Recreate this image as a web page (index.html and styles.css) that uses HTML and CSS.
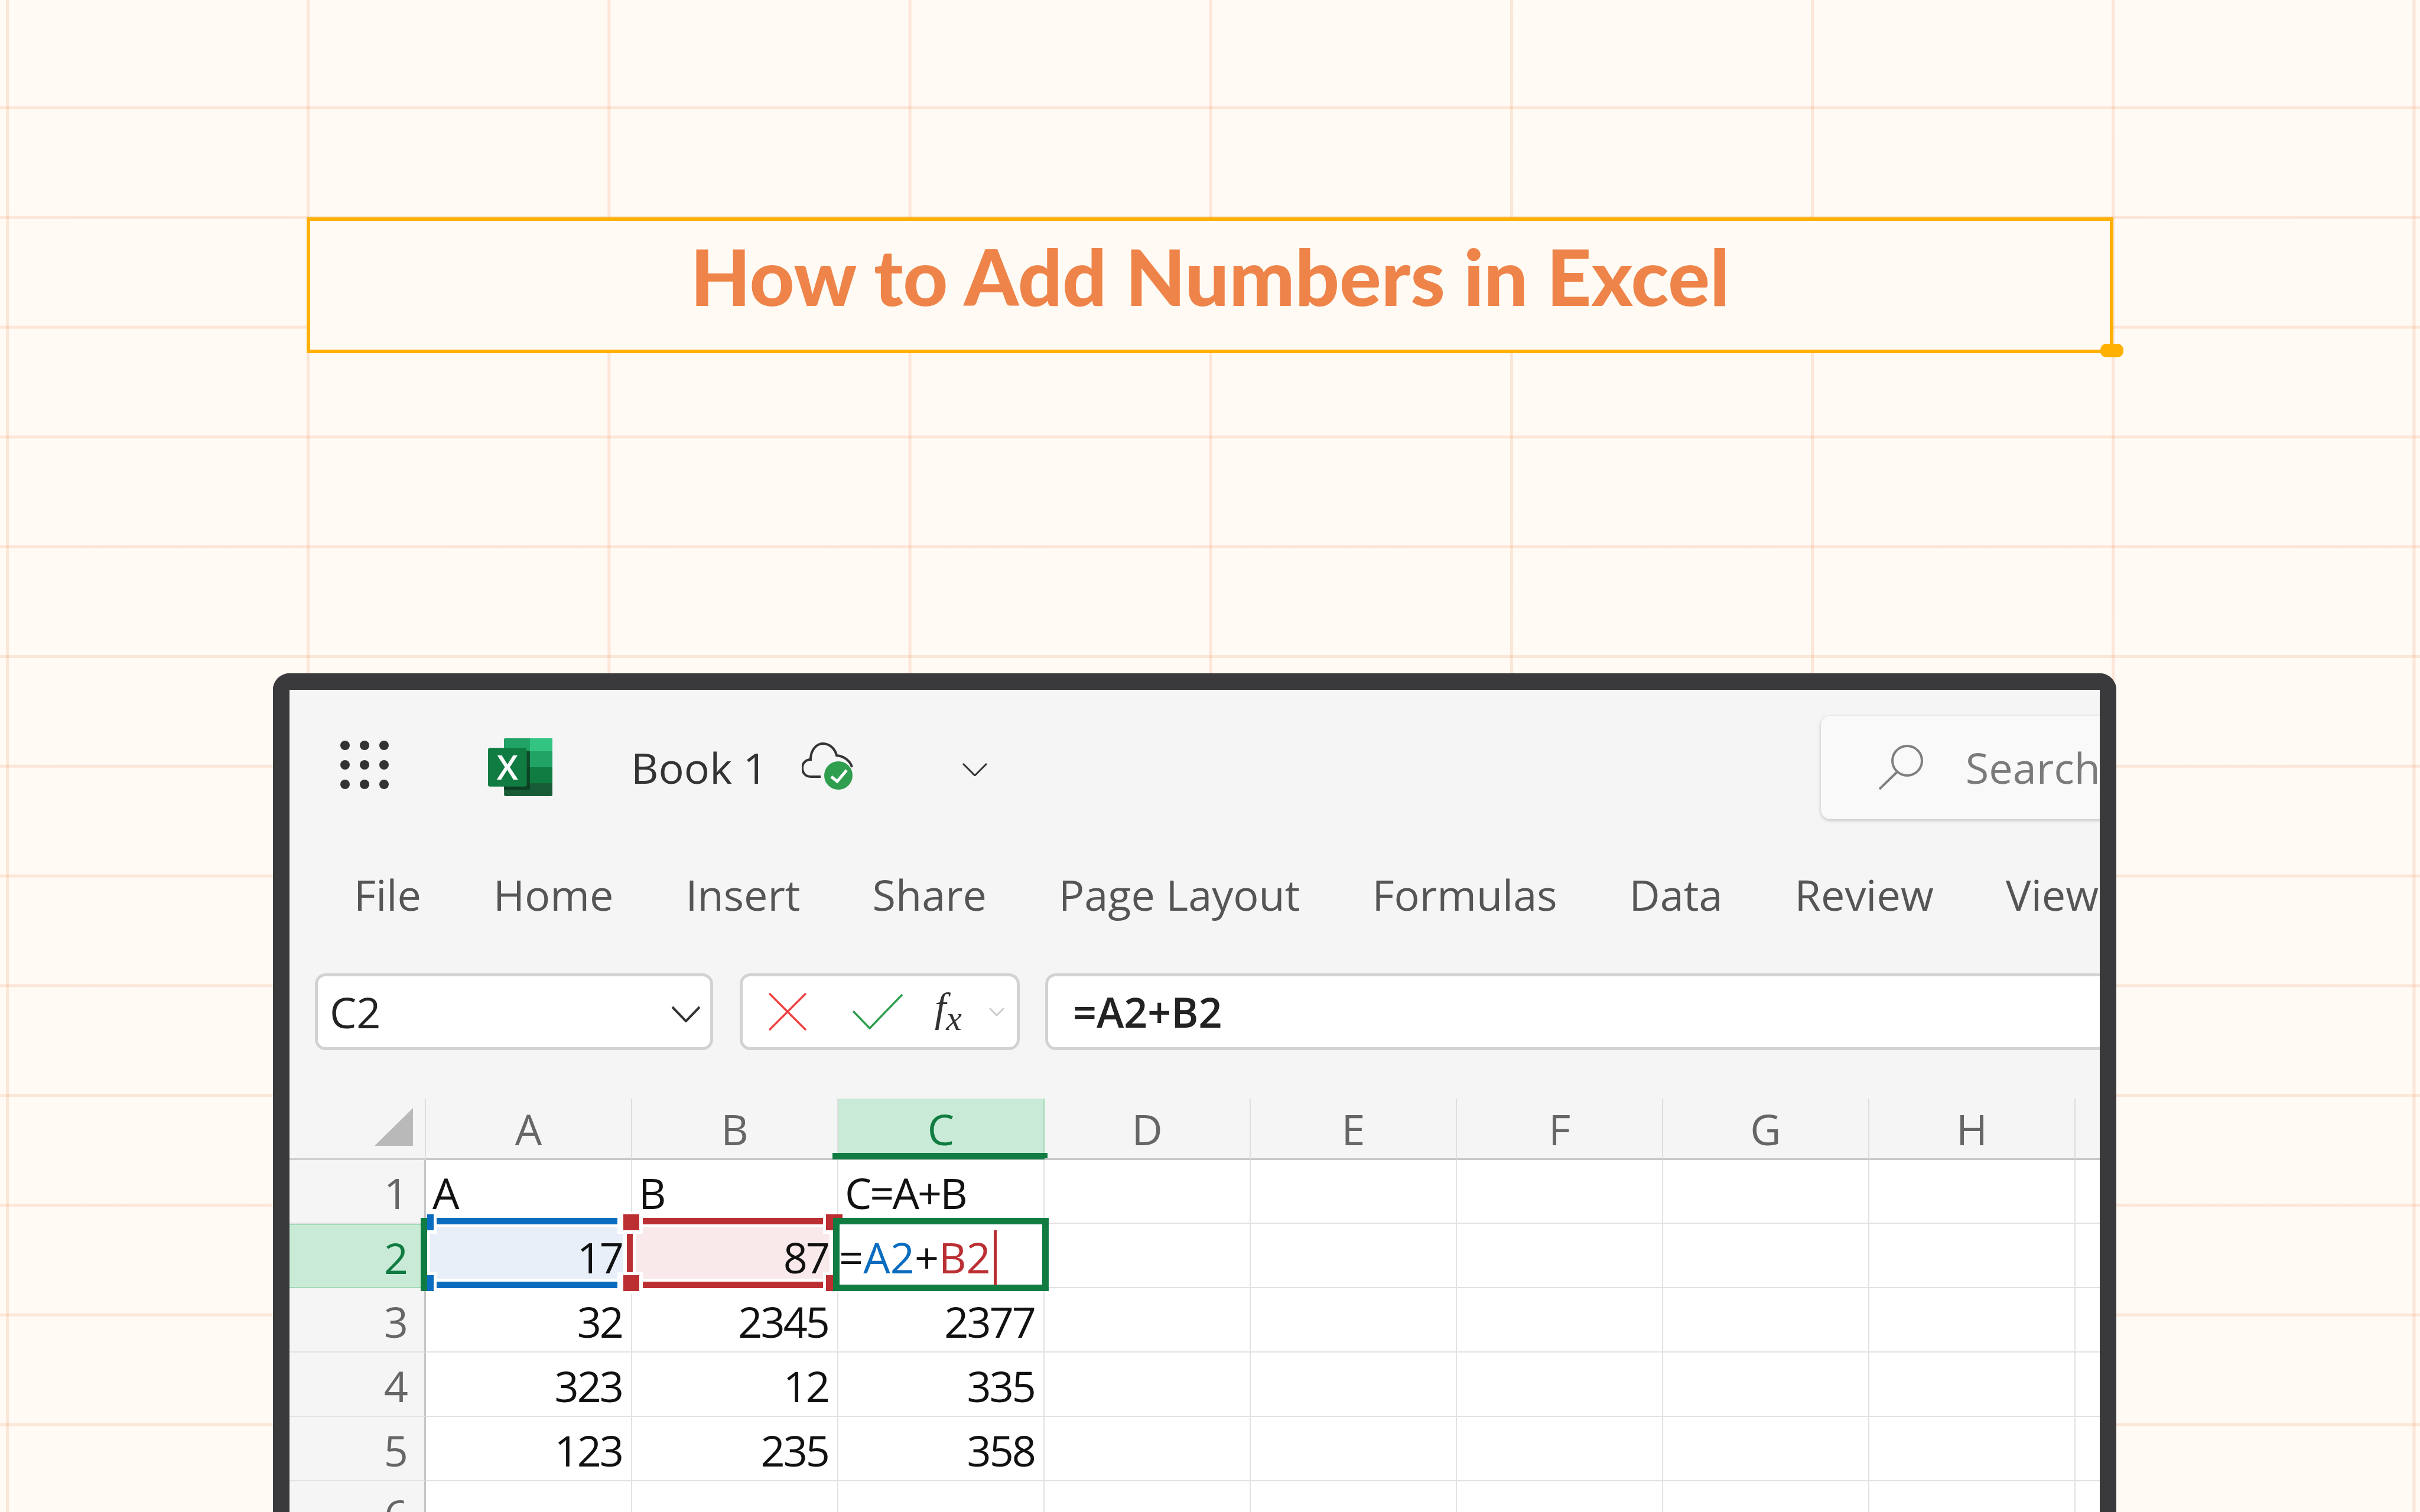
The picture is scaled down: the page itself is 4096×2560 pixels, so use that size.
FILE: index.html
```html
<!DOCTYPE html>
<html lang="en">
<head>
  <meta charset="UTF-8">
  <title>How to Add Numbers in Excel</title>
  <link rel="stylesheet" href="styles.css">
</head>
<body>

<!-- Title box -->
<div class="title-box">
  <h1>How to Add Numbers in Excel</h1>
  <span class="title-handle"></span>
</div>

<!-- Excel window -->
<div class="frame">

  <div class="topbar">
    <div class="waffle">
      <i></i><i></i><i></i>
      <i></i><i></i><i></i>
      <i></i><i></i><i></i>
    </div>
    <svg class="excel-logo" viewBox="159 126 409 368">
      <rect x="261" y="126" width="307" height="368" rx="10" fill="#185c37"/>
      <rect x="261" y="126" width="307" height="184" rx="10" fill="#21a366"/>
      <rect x="425" y="126" width="143" height="82" fill="#33c481"/>
      <rect x="261" y="310" width="307" height="102" fill="#107c41"/>
      <rect x="261" y="207" width="164" height="246" fill="#0c3a20" opacity="0.85"/>
      <rect x="159" y="187" width="246" height="246" rx="12" fill="#107c41"/>
      <text x="282" y="388" text-anchor="middle" class="excel-x">X</text>
    </svg>
    <span class="doc-name">Book 1</span>
    <svg class="cloud" viewBox="0 0 90 84">
      <path d="M32 58H15C6 58 1 51 1 43C1 35 7 29 15 29C15 14 24 2 36 2C48 2 57 12 59 22C70 23 82 30 85 42" fill="none" stroke="#333" stroke-width="4"/>
      <circle cx="62" cy="56" r="24" fill="#2f9e4f"/>
      <path d="M50 58L60 66L76 47" fill="none" stroke="#fff" stroke-width="5"/>
    </svg>
    <svg class="doc-chevron" viewBox="0 0 42 22">
      <path d="M1 1L21 21L41 1" fill="none" stroke="#333" stroke-width="3"/>
    </svg>
    <div class="search">
      <svg class="search-icon" viewBox="0 0 76 76">
        <circle cx="48" cy="27" r="25" fill="none" stroke="#7f7f7f" stroke-width="4"/>
        <path d="M31 46L1 75" fill="none" stroke="#7f7f7f" stroke-width="4"/>
      </svg>
      <span>Search</span>
    </div>
  </div>

  <div class="menu">
    <span>File</span>
    <span>Home</span>
    <span>Insert</span>
    <span>Share</span>
    <span>Page Layout</span>
    <span>Formulas</span>
    <span>Data</span>
    <span>Review</span>
    <span>View</span>
  </div>

  <div class="formula-row">
    <div class="field name-box">
      <span>C2</span>
      <svg class="name-chevron" viewBox="0 0 50 28">
        <path d="M2 2L25 26L48 2" fill="none" stroke="#333" stroke-width="4"/>
      </svg>
    </div>
    <div class="field fx-box">
      <svg class="fx-cancel" viewBox="0 0 64 64">
        <path d="M1 1L63 63M63 1L1 63" fill="none" stroke="#f04141" stroke-width="3.5"/>
      </svg>
      <svg class="fx-enter" viewBox="0 0 85 60">
        <path d="M1 29L29 58L84 1" fill="none" stroke="#2f9e4f" stroke-width="3.5"/>
      </svg>
      <span class="fx">f<span class="fx-x">x</span></span>
      <svg class="fx-chevron" viewBox="0 0 26 14">
        <path d="M1 1L13 13L25 1" fill="none" stroke="#cccccc" stroke-width="3"/>
      </svg>
    </div>
    <div class="field formula-box">=A2+B2</div>
  </div>

  <div class="sheet">
    <!-- selection ranges, in page pixels -->
    <svg class="ranges" viewBox="712 2050 1080 145" width="1080" height="145" shape-rendering="crispEdges">
      <rect x="723" y="2052" width="687" height="139" fill="#fff"/>

      <rect x="739" y="2078" width="306" height="87" fill="#e8eff9"/>
      <rect x="728" y="2089" width="327" height="65" fill="#e8eff9"/>
      <rect x="739" y="2062" width="306" height="11" fill="#0a6cbf"/>
      <rect x="739" y="2170" width="306" height="11" fill="#0a6cbf"/>
      <rect x="723" y="2056" width="11" height="27" fill="#0a6cbf"/>
      <rect x="723" y="2159" width="11" height="27" fill="#0a6cbf"/>

      <rect x="1088" y="2078" width="305" height="87" fill="#f9e9ea"/>
      <rect x="1077" y="2089" width="327" height="65" fill="#f9e9ea"/>
      <rect x="1088" y="2062" width="305" height="11" fill="#bb2f33"/>
      <rect x="1088" y="2170" width="305" height="11" fill="#bb2f33"/>
      <rect x="1061" y="2089" width="10" height="65" fill="#bb2f33"/>
      <rect x="1055" y="2056" width="27" height="27" fill="#bb2f33"/>
      <rect x="1055" y="2159" width="27" height="27" fill="#bb2f33"/>
      <rect x="1398" y="2056" width="28" height="27" fill="#bb2f33"/>
      <rect x="1398" y="2159" width="28" height="27" fill="#bb2f33"/>

      <rect x="712" y="2062" width="11" height="124" fill="#107c41"/>
      <rect x="1415.5" y="2067.5" width="354" height="113" fill="#fff" stroke="#107c41" stroke-width="11"/>
      <rect x="1682" y="2083" width="5" height="93" fill="#bb2f33"/>
    </svg>

    <div class="corner"><i></i></div>
    <div class="colhead">A</div>
    <div class="colhead">B</div>
    <div class="colhead active">C</div>
    <div class="colhead">D</div>
    <div class="colhead">E</div>
    <div class="colhead">F</div>
    <div class="colhead">G</div>
    <div class="colhead">H</div>
    <div class="colhead"></div>

    <div class="rowhead">1</div>
    <div class="cell"><span>A</span></div>
    <div class="cell"><span>B</span></div>
    <div class="cell"><span>C=A+B</span></div>
    <div class="cell"></div><div class="cell"></div><div class="cell"></div><div class="cell"></div><div class="cell"></div><div class="cell"></div>

    <div class="rowhead active">2</div>
    <div class="cell num"><span>17</span></div>
    <div class="cell num"><span>87</span></div>
    <div class="cell editing"><span>=<b class="ref-a">A2</b>+<b class="ref-b">B2</b></span></div>
    <div class="cell"></div><div class="cell"></div><div class="cell"></div><div class="cell"></div><div class="cell"></div><div class="cell"></div>

    <div class="rowhead">3</div>
    <div class="cell num"><span>32</span></div>
    <div class="cell num"><span>2345</span></div>
    <div class="cell num"><span>2377</span></div>
    <div class="cell"></div><div class="cell"></div><div class="cell"></div><div class="cell"></div><div class="cell"></div><div class="cell"></div>

    <div class="rowhead">4</div>
    <div class="cell num"><span>323</span></div>
    <div class="cell num"><span>12</span></div>
    <div class="cell num"><span>335</span></div>
    <div class="cell"></div><div class="cell"></div><div class="cell"></div><div class="cell"></div><div class="cell"></div><div class="cell"></div>

    <div class="rowhead">5</div>
    <div class="cell num"><span>123</span></div>
    <div class="cell num"><span>235</span></div>
    <div class="cell num"><span>358</span></div>
    <div class="cell"></div><div class="cell"></div><div class="cell"></div><div class="cell"></div><div class="cell"></div><div class="cell"></div>

    <div class="rowhead">6</div>
    <div class="cell"></div><div class="cell"></div><div class="cell"></div><div class="cell"></div><div class="cell"></div><div class="cell"></div><div class="cell"></div><div class="cell"></div><div class="cell"></div>
  </div>

</div>

</body>
</html>
```

FILE: styles.css
```css
:root {
  --paper: #fffaf4;
  --grid-line: rgba(238, 132, 73, 0.17);
  --accent: #ffb000;
  --title: #ee8449;
  --bezel: #3a3a3c;
  --chrome: #f5f5f5;
  --field-border: #d2d2d2;
  --cell-line: #e2e2e2;
  --excel-green: #107c41;
  --excel-tint: #c9ead6;
  --ui-font: "Open Sans", "Noto Sans", sans-serif;
}

html, body {
  height: 2560px;
  overflow: hidden;
}

body {
  margin: 0;
  padding-top: 368px;
  box-sizing: border-box;
  font-family: var(--ui-font);
  background-color: var(--paper);
  background-image:
    linear-gradient(to right, var(--grid-line) 5px, transparent 5px),
    linear-gradient(to bottom, var(--grid-line) 5px, transparent 5px);
  background-size: 509.2px 185.8px;
  background-position: 10px 180px;
}

/* Title */
.title-box {
  position: relative;
  box-sizing: border-box;
  width: 3058px;
  height: 230px;
  margin-left: 519px;
  padding-top: 27px;
  border: 6px solid var(--accent);
  background: var(--paper);
}

.title-box h1 {
  margin: 0;
  font-family: "Lato", sans-serif;
  font-size: 132px;
  line-height: 132px;
  font-weight: 900;
  color: var(--title);
  text-align: center;
}

.title-handle {
  position: absolute;
  right: -23px;
  bottom: -13px;
  width: 39px;
  height: 23px;
  border-radius: 10px;
  background: var(--accent);
}

/* Window */
.frame {
  box-sizing: border-box;
  width: 3120px;
  height: 1420px;
  margin: 542px 0 0 462px;
  border: 28px solid var(--bezel);
  border-bottom: 0;
  border-radius: 28px 28px 0 0;
  background: var(--chrome);
  overflow: hidden;
}

.topbar {
  display: flex;
  align-items: center;
  height: 262px;
  padding-left: 86px;
}

.waffle {
  display: grid;
  grid-template-columns: repeat(3, 16px);
  gap: 17px;
  margin-bottom: 8px;
}

.waffle i {
  width: 16px;
  height: 16px;
  border-radius: 50%;
  background: #333;
}

.excel-logo {
  width: 109px;
  height: 98px;
  margin-left: 168px;
  flex-shrink: 0;
}

.excel-x {
  font-family: "Open Sans", sans-serif;
  font-size: 218px;
  font-weight: 600;
  fill: #fff;
}

.doc-name {
  margin-left: 133px;
  font-size: 72px;
  color: #333;
  white-space: nowrap;
}

.cloud {
  width: 90px;
  height: 84px;
  margin-left: 58px;
  flex-shrink: 0;
}

.doc-chevron {
  width: 42px;
  height: 22px;
  margin: 8px 0 0 182px;
  flex-shrink: 0;
}

.search {
  display: flex;
  align-items: center;
  flex-shrink: 0;
  width: 700px;
  height: 175px;
  margin-left: 1411px;
  padding-left: 98px;
  box-sizing: border-box;
  border-radius: 16px;
  background: #f9f9f9;
  box-shadow: 0 2px 6px rgba(0, 0, 0, 0.22);
  font-size: 72px;
  color: #7a7a7a;
}

.search-icon {
  width: 76px;
  height: 76px;
  margin-right: 71px;
  flex-shrink: 0;
}

.menu {
  display: flex;
  align-items: center;
  gap: 122px;
  height: 168px;
  padding-left: 109px;
  font-size: 72px;
  color: #555;
  white-space: nowrap;
}

.formula-row {
  display: flex;
  gap: 45px;
  height: 130px;
  margin: 50px 0 0 43px;
}

.field {
  display: flex;
  align-items: center;
  flex-shrink: 0;
  box-sizing: border-box;
  border: 5px solid var(--field-border);
  border-radius: 18px;
  background: #fff;
}

.name-box {
  justify-content: space-between;
  width: 674px;
  padding: 0 16px 0 20px;
  font-size: 72px;
  color: #222;
}

.name-chevron {
  width: 50px;
  height: 28px;
  margin-top: 8px;
}

.fx-box {
  width: 474px;
  padding-left: 44px;
}

.fx-cancel {
  width: 64px;
  height: 64px;
  flex-shrink: 0;
}

.fx-enter {
  width: 85px;
  height: 60px;
  margin-left: 78px;
  flex-shrink: 0;
}

.fx {
  width: 60px;
  margin-left: 54px;
  font-family: "Liberation Serif", serif;
  font-style: italic;
  font-size: 69px;
  line-height: 1;
  color: #333;
  flex-shrink: 0;
}

.fx-x {
  font-size: 60px;
  vertical-align: -15px;
}

.fx-chevron {
  width: 26px;
  height: 14px;
  margin-left: 32px;
  flex-shrink: 0;
}

.formula-box {
  width: 1900px;
  margin-left: -2px;
  padding-left: 42px;
  font-size: 70px;
  font-weight: 600;
  color: #222;
}

/* Spreadsheet */
.sheet {
  position: relative;
  display: grid;
  grid-template-columns: 231px repeat(9, 349px);
  grid-template-rows: 104px 108px repeat(5, 109px);
  margin-top: 82px;
  font-size: 72px;
}

.ranges {
  position: absolute;
  left: 222px;
  top: 190px;
  z-index: 2;
}

.corner {
  display: flex;
  justify-content: flex-end;
  align-items: flex-end;
  box-sizing: border-box;
  padding: 0 20px 21px 0;
  border-bottom: 3px solid #cfcfcf;
  border-right: 2px solid #dedede;
}

.corner i {
  width: 65px;
  height: 64px;
  background: #b9b9b9;
  clip-path: polygon(100% 0, 100% 100%, 0 100%);
}

.colhead {
  position: relative;
  display: flex;
  justify-content: center;
  align-items: center;
  box-sizing: border-box;
  border-bottom: 3px solid #c8c8c8;
  border-right: 2px solid #dedede;
  color: #666;
}

.colhead.active {
  background: var(--excel-tint);
  border-right-color: #a3d9b8;
  color: var(--excel-green);
}

.colhead.active::after {
  content: "";
  position: absolute;
  left: -10px;
  right: -7px;
  bottom: -2px;
  height: 11px;
  background: var(--excel-green);
}

.rowhead {
  display: flex;
  justify-content: flex-end;
  align-items: center;
  box-sizing: border-box;
  padding: 4px 27px 0 0;
  border-right: 3px solid #c6c6c6;
  border-bottom: 2px solid var(--cell-line);
  color: #666;
}

.rowhead.active {
  background: var(--excel-tint);
  border-top: 2px solid #a3d9b8;
  border-bottom-color: #a3d9b8;
  color: var(--excel-green);
}

.cell {
  display: flex;
  align-items: center;
  box-sizing: border-box;
  padding: 4px 15px 0 11px;
  background: #fff;
  border-right: 2px solid var(--cell-line);
  border-bottom: 2px solid var(--cell-line);
  color: #111;
  letter-spacing: -3px;
}

.cell span {
  position: relative;
  z-index: 3;
  white-space: nowrap;
}

.cell.num {
  justify-content: flex-end;
}

.cell.editing {
  padding-left: 1px;
  letter-spacing: 0;
}

.cell.editing b {
  font-weight: 400;
}

.ref-a {
  color: #0a6cbf;
}

.ref-b {
  color: #bb2f33;
}
```
